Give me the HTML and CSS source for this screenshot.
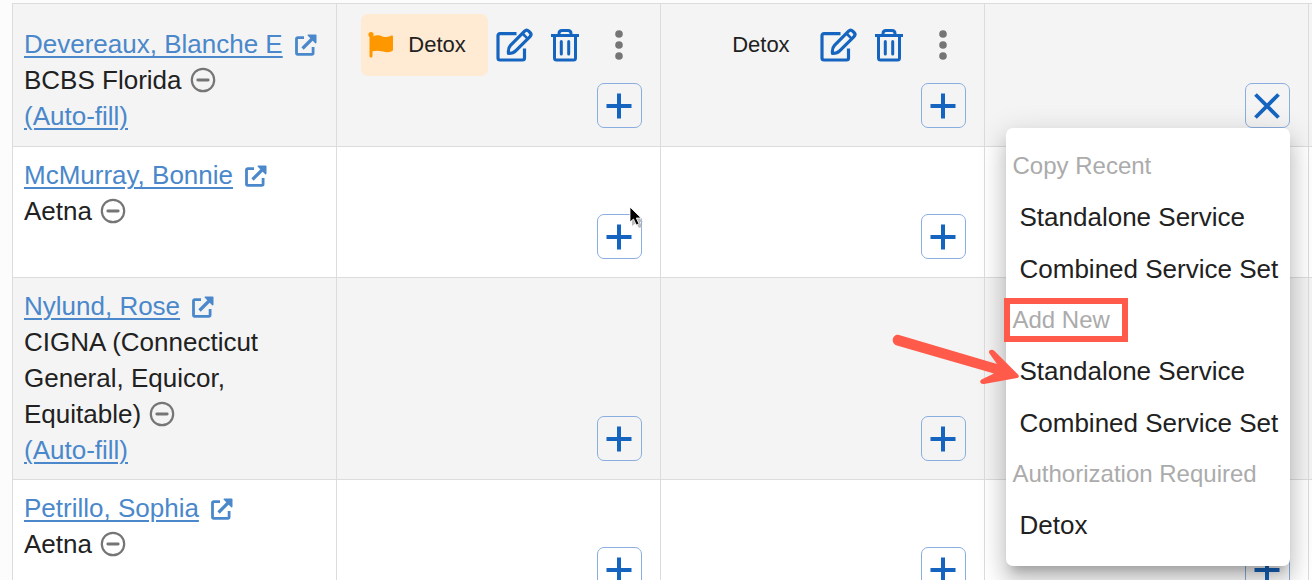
FILE: index.html
```html
<!DOCTYPE html>
<html lang="en">
<head>
<meta charset="utf-8">
<meta name="viewport" content="width=device-width, initial-scale=1">
<title>Patient services</title>
<link rel="stylesheet" href="styles.css">
</head>
<body>
<svg class="sprite" aria-hidden="true">
  <symbol id="external" viewBox="0 0 22 22">
    <path d="M9 3.700H2.800a1.300 1.300 0 0 0-1.300 1.300v14a1.300 1.300 0 0 0 1.300 1.300h14a1.300 1.300 0 0 0 1.300-1.300V13" fill="none" stroke="currentColor" stroke-width="2.800"/>
    <path d="M7.500 14.500 18 4" fill="none" stroke="currentColor" stroke-width="3.200"/>
    <path d="M12.500 1.200a.8.8 0 0 1 .8-.8h7.400a.8.800 0 0 1 .8.800v7.400a.8.800 0 0 1-1.300.6l-7.400-7.400a.8.800 0 0 1-.3-.6z" fill="currentColor"/>
  </symbol>
  <symbol id="minus" viewBox="0 0 26 26">
    <circle cx="13" cy="13" r="11.200" fill="none" stroke="currentColor" stroke-width="2.200"/>
    <path d="M7.800 13h10.400" stroke="currentColor" stroke-width="2.800" stroke-linecap="round"/>
  </symbol>
  <symbol id="flag" viewBox="0 0 26 26">
    <circle cx="3" cy="2.600" r="2.600" fill="currentColor"/>
    <path d="M1.500 2.600h3V4.400c5-1.600 7-1.200 10 0 3.500 1.200 6.500.5 9-.8.900-.4 1.500.1 1.500.8v13.400c0 .7-.3 1.100-1 1.400-3 1.300-6 1.300-9 .4-4-1.200-7-1.200-10.500-.4V24a1.500 1.500 0 0 1-3 0z" fill="currentColor"/>
  </symbol>
  <symbol id="edit" viewBox="0 0 38 34">
    <g fill="none" stroke="currentColor" stroke-width="3.200" stroke-linejoin="round">
      <path d="M20.500 5.600H4a2 2 0 0 0-2 2V30a2 2 0 0 0 2 2h22.500a2 2 0 0 0 2-2V20.500"/>
      <path d="M12.500 25.500c-.6-5 .3-6.500 2-8.200L28.600 3.200c1.300-1.300 2.800-1.300 4.100 0l1.300 1.300c1.300 1.300 1.300 2.800 0 4.100L19.900 22.700c-1.700 1.800-3.400 2.900-7.400 2.800z"/>
      <path d="m26.500 5.500 5.300 5.300" stroke-width="2.600"/>
    </g>
  </symbol>
  <symbol id="trash" viewBox="0 0 28 34">
    <g fill="none" stroke="currentColor" stroke-width="3">
      <path d="M0 7.500h28"/>
      <path d="M8 7V5.500c0-2 1-3 3-3h6c2 0 3 1 3 3V7"/>
      <path d="M3.500 8v22a2 2 0 0 0 2 2h17a2 2 0 0 0 2-2V8"/>
      <path d="M10.300 13.500v12.500M17.700 13.500v12.500" stroke-linecap="round"/>
    </g>
  </symbol>
  <symbol id="dots" viewBox="0 0 8 30">
    <circle cx="4" cy="4" r="3.800" fill="currentColor"/>
    <circle cx="4" cy="15" r="3.800" fill="currentColor"/>
    <circle cx="4" cy="26" r="3.800" fill="currentColor"/>
  </symbol>
  <symbol id="plus" viewBox="0 0 26 26">
    <path d="M13 0.500v25M0.500 13h25" stroke="currentColor" stroke-width="4"/>
  </symbol>
  <symbol id="close" viewBox="0 0 26 26">
    <path d="M1.500 1.500l23 23M24.500 1.500l-23 23" stroke="currentColor" stroke-width="3.800"/>
  </symbol>
</svg>

<table class="grid">
  <colgroup><col><col><col><col><col class="edge"></colgroup>
  <tbody>
    <tr class="row">
      <td class="patient patient-with-service">
        <a class="link" href="#">Devereaux, Blanche E</a><svg class="icon-external"><use href="#external"/></svg>
        <div>BCBS Florida<svg class="icon-minus"><use href="#minus"/></svg></div>
        <a class="link" href="#">(Auto-fill)</a>
      </td>
      <td class="slot">
        <div class="service">
          <span class="chip chip-flagged"><svg class="icon-flag"><use href="#flag"/></svg>Detox</span>
          <button class="tool tool-edit" aria-label="Edit"><svg><use href="#edit"/></svg></button>
          <button class="tool tool-trash" aria-label="Delete"><svg><use href="#trash"/></svg></button>
          <button class="tool tool-more" aria-label="More"><svg><use href="#dots"/></svg></button>
        </div>
        <div class="action"><button class="add" aria-label="Add service"><svg><use href="#plus"/></svg></button></div>
      </td>
      <td class="slot">
        <div class="service">
          <span class="chip">Detox</span>
          <button class="tool tool-edit" aria-label="Edit"><svg><use href="#edit"/></svg></button>
          <button class="tool tool-trash" aria-label="Delete"><svg><use href="#trash"/></svg></button>
          <button class="tool tool-more" aria-label="More"><svg><use href="#dots"/></svg></button>
        </div>
        <div class="action"><button class="add" aria-label="Add service"><svg><use href="#plus"/></svg></button></div>
      </td>
      <td class="slot">
        <div class="action">
          <button class="add" aria-label="Close menu"><svg><use href="#close"/></svg></button>
          <div class="menu">
            <div class="menu-head">Copy Recent</div>
            <button class="menu-item">Standalone Service</button>
            <button class="menu-item">Combined Service Set</button>
            <div class="menu-head menu-head-marked">Add New
              <svg class="arrow" viewBox="0 0 128 54" aria-hidden="true"><path d="M7 3 105 32 97.500 21.500C95.500 18.500 100 16.500 102.500 19L126 42.500C127.500 44 127 45.500 125 46L92 52C87.500 52.500 87 48.500 90.500 47L102 41.500 4 13.300C-2 10.500 1 1.500 7 3Z" fill="#ff5a4a"/></svg>
            </div>
            <button class="menu-item">Standalone Service</button>
            <button class="menu-item">Combined Service Set</button>
            <div class="menu-head">Authorization Required</div>
            <button class="menu-item">Detox</button>
          </div>
        </div>
      </td>
      <td class="slot-edge"></td>
    </tr>
    <tr class="row">
      <td class="patient">
        <a class="link" href="#">McMurray, Bonnie</a><svg class="icon-external"><use href="#external"/></svg>
        <div>Aetna<svg class="icon-minus"><use href="#minus"/></svg></div>
      </td>
      <td class="slot"><div class="action"><button class="add" aria-label="Add service"><svg><use href="#plus"/></svg></button>
        <svg class="cursor" viewBox="0 0 14 22" aria-hidden="true"><path d="M3 4v16l4-3 3 5 3-1-2-5h3z" fill="#bbb"/><path d="M1 1v15l3.500-3 2.800 6 2.700-1.300-2.700-5.700H12z" fill="#000" stroke="#fff" stroke-width=".8"/></svg></div></td>
      <td class="slot"><div class="action"><button class="add" aria-label="Add service"><svg><use href="#plus"/></svg></button></div></td>
      <td class="slot"><div class="action"><button class="add" aria-label="Add service"><svg><use href="#plus"/></svg></button></div></td>
      <td class="slot-edge"></td>
    </tr>
    <tr class="row">
      <td class="patient">
        <a class="link" href="#">Nylund, Rose</a><svg class="icon-external"><use href="#external"/></svg>
        <div>CIGNA (Connecticut General, Equicor, Equitable)<svg class="icon-minus"><use href="#minus"/></svg></div>
        <a class="link" href="#">(Auto-fill)</a>
      </td>
      <td class="slot"><div class="action"><button class="add" aria-label="Add service"><svg><use href="#plus"/></svg></button></div></td>
      <td class="slot"><div class="action"><button class="add" aria-label="Add service"><svg><use href="#plus"/></svg></button></div></td>
      <td class="slot"><div class="action"><button class="add" aria-label="Add service"><svg><use href="#plus"/></svg></button></div></td>
      <td class="slot-edge"></td>
    </tr>
    <tr class="row">
      <td class="patient">
        <a class="link" href="#">Petrillo, Sophia</a><svg class="icon-external"><use href="#external"/></svg>
        <div>Aetna<svg class="icon-minus"><use href="#minus"/></svg></div>
      </td>
      <td class="slot"><div class="action"><button class="add" aria-label="Add service"><svg><use href="#plus"/></svg></button></div></td>
      <td class="slot"><div class="action"><button class="add" aria-label="Add service"><svg><use href="#plus"/></svg></button></div></td>
      <td class="slot"><div class="action"><button class="add" aria-label="Add service"><svg><use href="#plus"/></svg></button></div></td>
      <td class="slot-edge"></td>
    </tr>
  </tbody>
</table>
</body>
</html>
```

FILE: styles.css
```css
*,
*::after {
  box-sizing: border-box;
}

html {
  height: 100%;
  overflow: hidden;
}

body {
  height: 100%;
  margin: 0;
  padding: 3px 0 0 12px;
  overflow: hidden;
  background: #fcfcfc;
  color: #212121;
  font-family: "Liberation Sans", Arial, sans-serif;
  font-size: 26px;
  line-height: 36px;
}

button {
  padding: 0;
  border: 0;
  background: none;
  color: inherit;
  font: inherit;
  cursor: pointer;
}

.sprite {
  position: absolute;
  width: 0;
  height: 0;
}

.grid {
  width: 100%;
  table-layout: fixed;
  border-collapse: collapse;
}

.edge {
  width: 4px;
}

.row {
  height: 131px;
  background: #fff;
}

.row:nth-child(odd) {
  background: #f4f4f4;
}

.patient,
.slot,
.slot-edge {
  border: 1px solid #dcdcdc;
}

.slot-edge {
  padding: 0;
  border-right: 0;
}

.patient {
  padding: 10px 11px 11px;
  vertical-align: top;
}

.patient-with-service {
  padding-top: 22px;
}

.link {
  color: #4a88cb;
  text-decoration: underline;
  text-decoration-thickness: 2px;
  text-underline-offset: 3px;
}

.icon-external {
  width: 22px;
  height: 22px;
  margin-left: 12px;
  color: #4a88cb;
  vertical-align: -3px;
}

.icon-minus {
  width: 26px;
  height: 26px;
  margin-left: 8px;
  color: #757575;
  vertical-align: -4px;
}

.slot {
  padding: 10px 18px 18px;
  vertical-align: bottom;
}

.service {
  display: flex;
  align-items: center;
  justify-content: flex-end;
  margin-bottom: 7px;
}

.chip {
  display: flex;
  align-items: center;
  justify-content: flex-end;
  gap: 14px;
  height: 62px;
  padding: 0 22px 0 7px;
  border-radius: 7px;
  font-size: 22px;
}

.chip-flagged {
  background: #ffead3;
}

.icon-flag {
  width: 26px;
  height: 26px;
  color: #ff9800;
}

.tool {
  display: flex;
  justify-content: center;
  color: #1565c0;
}

.tool svg {
  width: 100%;
  height: 34px;
}

.tool-edit {
  width: 38px;
  margin-left: 8px;
}

.tool-trash {
  width: 28px;
  margin-left: 17px;
}

.tool-more {
  width: 45px;
  margin-left: 18px;
  color: #757575;
}

.tool-more svg {
  width: 8px;
  height: 30px;
}

.action {
  position: relative;
  display: flex;
  justify-content: flex-end;
}

.add {
  display: flex;
  align-items: center;
  justify-content: center;
  width: 45px;
  height: 45px;
  border: 1px solid #8aaee0;
  border-radius: 7px;
  color: #1565c0;
}

.add svg {
  width: 26px;
  height: 26px;
}

.cursor {
  position: absolute;
  top: -8px;
  right: -1px;
  width: 14px;
  height: 22px;
}

.menu {
  position: absolute;
  z-index: 2;
  top: 100%;
  right: 0;
  display: flex;
  flex-direction: column;
  min-width: 284px;
  padding: 13px 0 15px;
  border-radius: 7px;
  background: #fff;
  box-shadow:
    0 10px 10px -6px rgba(0, 0, 0, 0.2),
    0 16px 20px 2px rgba(0, 0, 0, 0.14),
    0 6px 28px 4px rgba(0, 0, 0, 0.12);
}

.menu-head,
.menu-item {
  text-align: left;
  white-space: nowrap;
}

.menu-head {
  padding: 0 7px;
  color: #ababab;
  font-size: 24px;
  line-height: 50px;
}

.menu-item {
  padding: 0 11px 0 14px;
  line-height: 52px;
}

.menu-head-marked {
  position: relative;
}

.menu-head-marked::after {
  content: "";
  position: absolute;
  top: 3px;
  left: -2px;
  width: 124px;
  height: 44px;
  border: 6px solid #ff5a4a;
}

.arrow {
  position: absolute;
  top: 37px;
  left: -114px;
  width: 128px;
  height: 54px;
}
```
